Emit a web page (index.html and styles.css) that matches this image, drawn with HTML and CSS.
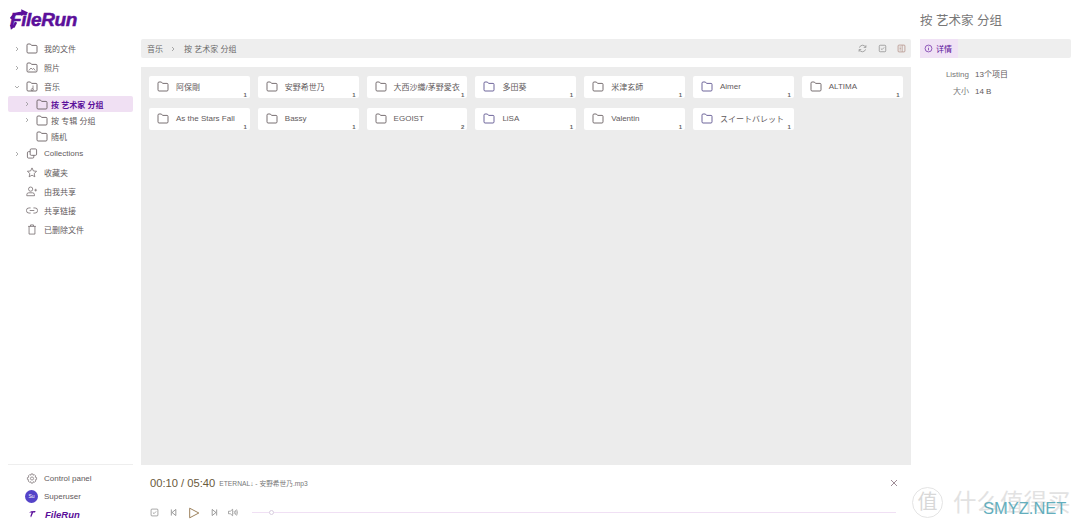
FILE: index.html
```html
<!DOCTYPE html>
<html lang="zh-CN">
<head>
    <meta charset="UTF-8">
    <meta name="viewport" content="width=device-width, initial-scale=1.0">
    <title>FileRun</title>
    <link rel="stylesheet" href="styles.css">
</head>

<body>
    <svg class="defs" width="0" height="0">
        <symbol id="folder" viewBox="0 0 12 11"><path d="M1 2.2Q1 1 2 1H4.4L5.6 2.4H10Q11 2.4 11 3.4V8.8Q11 10 10 10H2Q1 10 1 8.8Z" fill="none" stroke="currentColor" stroke-width=".9"/></symbol>
        <symbol id="chev" viewBox="0 0 6 6"><path d="M2 1L4 3L2 5" fill="none" stroke="currentColor" stroke-width=".7"/></symbol>
        <symbol id="chev-down" viewBox="0 0 6 6"><path d="M1 2L3 4L5 2" fill="none" stroke="currentColor" stroke-width=".7"/></symbol>
    </svg>

    <div id="app">
        <!--left tree-->
        <aside class="sidebar">
            <div class="logo"><span class="logo-text">FileRun</span>
                <svg class="logo-arrow" viewBox="0 0 22 24">
                    <path d="M1 11Q5 4 15 4" fill="none" stroke="#5b0f9a" stroke-width="2.8"/>
                    <path d="M13 0L21 4L13 8Z" fill="#5b0f9a"/>
                    <path d="M7 15L4 21" fill="none" stroke="#5b0f9a" stroke-width="2.8"/>
                    <path d="M0 18L6 20L1 24Z" fill="#5b0f9a"/>
                </svg>
            </div>
            <nav class="tree">
                <div class="row"><svg class="chev"><use href="#chev"/></svg><svg class="ico"><use href="#folder"/></svg><span>我的文件</span></div>
                <div class="row"><svg class="chev"><use href="#chev"/></svg>
                    <svg class="ico" viewBox="0 0 12 11"><path d="M1 2.2Q1 1 2 1H4.4L5.6 2.4H10Q11 2.4 11 3.4V8.8Q11 10 10 10H2Q1 10 1 8.8Z" fill="none" stroke="currentColor" stroke-width=".9"/><path d="M2.8 8.5L5 6L6.4 7.4L7.6 6.4L9.2 8.5" fill="none" stroke="currentColor" stroke-width=".7"/></svg>
                    <span>照片</span></div>
                <div class="row"><svg class="chev"><use href="#chev-down"/></svg>
                    <svg class="ico" viewBox="0 0 12 11"><path d="M1 2.2Q1 1 2 1H4.4L5.6 2.4H10Q11 2.4 11 3.4V8.8Q11 10 10 10H2Q1 10 1 8.8Z" fill="none" stroke="currentColor" stroke-width=".9"/><path d="M7 4.5V8M7 8A1 1 0 1 1 6.9 7.9" fill="none" stroke="currentColor" stroke-width=".7"/></svg>
                    <span>音乐</span></div>
                <div class="row sub active"><svg class="chev"><use href="#chev"/></svg><svg class="ico"><use href="#folder"/></svg><span>按 艺术家 分组</span></div>
                <div class="row sub"><svg class="chev"><use href="#chev"/></svg><svg class="ico"><use href="#folder"/></svg><span>按 专辑 分组</span></div>
                <div class="row sub"><i class="chev"></i><svg class="ico"><use href="#folder"/></svg><span>随机</span></div>
                <div class="row"><svg class="chev"><use href="#chev"/></svg>
                    <svg class="ico" viewBox="0 0 12 12"><rect x="4" y="1" width="7" height="7" rx="1.2" fill="none" stroke="currentColor" stroke-width=".9"/><path d="M4 4H2.2Q1 4 1 5.2V9.8Q1 11 2.2 11H6.8Q8 11 8 9.8V8" fill="none" stroke="currentColor" stroke-width=".9"/></svg>
                    <span>Collections</span></div>
                <div class="row"><i class="chev"></i>
                    <svg class="ico" viewBox="0 0 12 12"><path d="M6 1L7.5 4.3L11 4.7L8.4 7.1L9.1 10.7L6 8.9L2.9 10.7L3.6 7.1L1 4.7L4.5 4.3Z" fill="none" stroke="currentColor" stroke-width=".8"/></svg>
                    <span>收藏夹</span></div>
                <div class="row"><i class="chev"></i>
                    <svg class="ico" viewBox="0 0 13 12"><circle cx="5" cy="3.4" r="2.3" fill="none" stroke="currentColor" stroke-width=".8"/><path d="M.8 10.6V9.6Q.8 7.4 3 7.4H7Q9.2 7.4 9.2 9.6V10.6Z" fill="none" stroke="currentColor" stroke-width=".8"/><path d="M10.5 3V6M9 4.5H12" fill="none" stroke="currentColor" stroke-width=".7"/></svg>
                    <span>由我共享</span></div>
                <div class="row"><i class="chev"></i>
                    <svg class="ico" viewBox="0 0 13 12"><path d="M5 3.2H3.2A2.8 2.8 0 0 0 3.2 8.8H5M8 3.2H9.8A2.8 2.8 0 0 1 9.8 8.8H8M4 6H9" fill="none" stroke="currentColor" stroke-width=".8"/></svg>
                    <span>共享链接</span></div>
                <div class="row"><i class="chev"></i>
                    <svg class="ico" viewBox="0 0 12 12"><path d="M1.8 2.6H10.2M4.4 2.4V1H7.6V2.4M2.8 2.6V11H9.2V2.6" fill="none" stroke="currentColor" stroke-width=".8"/></svg>
                    <span>已删除文件</span></div>
            </nav>
            <div class="side-foot">
                <div class="row"><i class="chev"></i>
                    <svg class="ico" viewBox="0 0 12 12"><circle cx="6" cy="6" r="1.7" fill="none" stroke="currentColor" stroke-width=".7"/><path d="M5 1H7L7.3 2.4L8.6 1.8L10 3.2L9.4 4.5L11 5V7L9.6 7.4L10.2 8.7L8.8 10.1L7.5 9.5L7 11H5L4.5 9.5L3.2 10.1L1.8 8.7L2.4 7.4L1 7V5L2.6 4.5L2 3.2L3.4 1.8L4.7 2.4Z" fill="none" stroke="currentColor" stroke-width=".7"/></svg>
                    <span>Control panel</span></div>
                <div class="row user"><b class="avatar">Su</b><span>Superuser</span></div>
                <div class="row brand">
                    <svg class="mini-mark" viewBox="0 0 8 8"><path d="M1 2.4Q3 .8 7.6 1L7 2.4H5.2L3 7.6L2.4 6L3.6 2.6Q2.4 2.4 1 2.4Z" fill="#5b0f9a"/></svg>
                    <span class="mini-logo">FileRun</span>
                </div>
            </div>
        </aside>

        <!--middle-->
        <main class="main">
            <div class="crumbs">
                <span>音乐</span>
                <svg class="chev"><use href="#chev"/></svg>
                <span>按 艺术家 分组</span>
                <div class="tools">
                    <svg viewBox="0 0 10 10"><path d="M8.5 3.5A3.7 3.7 0 0 0 1.6 4M1.5 6.5A3.7 3.7 0 0 0 8.4 6M8.8 1.4V3.8H6.4M1.2 8.6V6.2H3.6" fill="none" stroke="currentColor" stroke-width=".8"/></svg>
                    <svg viewBox="0 0 10 10"><rect x="1.4" y="1.4" width="7.2" height="7.2" rx="1" fill="none" stroke="currentColor" stroke-width=".8"/><path d="M3.2 5L4.5 6.3L6.8 3.8" fill="none" stroke="currentColor" stroke-width=".8"/></svg>
                    <svg viewBox="0 0 10 10"><rect x="1.2" y="1.2" width="7.6" height="7.6" rx="1" fill="none" stroke="#b08a80" stroke-width=".8"/><path d="M5.8 1.4V8.6M2.8 3.4H4.6M2.8 5H4.6M2.8 6.6H4.6" fill="none" stroke="#b08a80" stroke-width=".7"/></svg>
                </div>
            </div>
            <div class="files">
                <div class="card"><svg class="ico"><use href="#folder"/></svg><span>阿保剛</span><em>1</em></div>
                <div class="card"><svg class="ico"><use href="#folder"/></svg><span>安野希世乃</span><em>1</em></div>
                <div class="card"><svg class="ico"><use href="#folder"/></svg><span>大西沙織/茅野愛衣</span><em>1</em></div>
                <div class="card"><svg class="ico tint"><use href="#folder"/></svg><span>多田葵</span><em>1</em></div>
                <div class="card"><svg class="ico"><use href="#folder"/></svg><span>米津玄師</span><em>1</em></div>
                <div class="card"><svg class="ico tint"><use href="#folder"/></svg><span>Aimer</span><em>1</em></div>
                <div class="card"><svg class="ico"><use href="#folder"/></svg><span>ALTIMA</span><em>1</em></div>
                <div class="card"><svg class="ico"><use href="#folder"/></svg><span>As the Stars Fall</span><em>1</em></div>
                <div class="card"><svg class="ico"><use href="#folder"/></svg><span>Bassy</span><em>1</em></div>
                <div class="card"><svg class="ico"><use href="#folder"/></svg><span>EGOIST</span><em>2</em></div>
                <div class="card"><svg class="ico tint"><use href="#folder"/></svg><span>LiSA</span><em>1</em></div>
                <div class="card"><svg class="ico"><use href="#folder"/></svg><span>Valentin</span><em>1</em></div>
                <div class="card"><svg class="ico tint"><use href="#folder"/></svg><span>スイートバレット</span><em>1</em></div>
            </div>
            <div class="player">
                <div class="now">
                    <span class="time">00:10 / 05:40</span>
                    <span class="track">ETERNAL↓ - 安野希世乃.mp3</span>
                    <svg class="close" viewBox="0 0 8 8"><path d="M1 1L7 7M7 1L1 7" fill="none" stroke="#86707c" stroke-width=".8"/></svg>
                </div>
                <div class="controls">
                    <svg class="ctl" viewBox="0 0 10 10"><rect x="1.2" y="1.2" width="7.6" height="7.6" rx="1" fill="none" stroke="currentColor" stroke-width=".7"/><path d="M3.2 5L4.5 6.3L6.8 3.8" fill="none" stroke="currentColor" stroke-width=".7"/></svg>
                    <svg class="ctl" viewBox="0 0 10 10"><path d="M2.6 1.6V8.4M7.6 1.6V8.4L3.4 5Z" fill="none" stroke="currentColor" stroke-width=".8"/></svg>
                    <svg class="ctl play" viewBox="0 0 10 10"><path d="M1.4 1V9L9 5Z" fill="none" stroke="#8a6a3e" stroke-width=".7"/></svg>
                    <svg class="ctl" viewBox="0 0 10 10"><path d="M7.4 1.6V8.4M2.4 1.6V8.4L6.6 5Z" fill="none" stroke="currentColor" stroke-width=".8"/></svg>
                    <svg class="ctl wide" viewBox="0 0 12 10"><path d="M1 3.6H3L5.6 1.4V8.6L3 6.4H1ZM7.2 3.4Q8 5 7.2 6.6M8.6 2.4Q10 5 8.6 7.6M10 1.6Q11.8 5 10 8.4" fill="none" stroke="currentColor" stroke-width=".7"/></svg>
                    <div class="seek"><i></i></div>
                </div>
            </div>
        </main>

        <!--right details-->
        <aside class="details">
            <h1>按 艺术家 分组</h1>
            <div class="tabs">
                <div class="tab">
                    <svg viewBox="0 0 10 10"><circle cx="5" cy="5" r="3.8" fill="none" stroke="currentColor" stroke-width=".7"/><path d="M5 4.4V7M5 3V3.6" fill="none" stroke="currentColor" stroke-width=".7"/></svg>
                    <span>详情</span>
                </div>
            </div>
            <dl class="props">
                <dt>Listing</dt><dd>13个项目</dd>
                <dt>大小</dt><dd>14 B</dd>
            </dl>
        </aside>
    </div>

    <div class="watermark">
        <span class="seal">值</span>
        <span class="wm-cn">什么值得买</span>
        <span class="wm-en">SMYZ.NET</span>
    </div>
</body>
</html>
```

FILE: styles.css
```css
* {
    box-sizing: border-box;
}
html, body {
    height: 100%;
}
body {
    margin: 0;
    font-family: "Liberation Sans", "Noto Sans CJK SC", sans-serif;
    font-size: 8px;
    color: #5f5a5c;
    background-color: #fff;
    overflow: hidden;
}
.defs {
    position: absolute;
}
#app {
    display: flex;
    height: 527px;
}

/* sidebar */
.sidebar {
    width: 141px;
    flex: none;
    display: flex;
    flex-direction: column;
    padding: 0 8px;
}
.logo {
    position: relative;
    height: 39px;
    padding: 9px 0 0 2px;
}
.logo-text {
    font-size: 19px;
    line-height: 22px;
    font-weight: bold;
    font-style: italic;
    letter-spacing: -.4px;
    color: #5b0f9a;
    -webkit-text-stroke: .5px #5b0f9a;
}
.logo-arrow {
    position: absolute;
    left: 2px;
    top: 8px;
    width: 19px;
    height: 23px;
}
.tree {
    flex: 1;
}
.row {
    display: flex;
    align-items: center;
    height: 19px;
    width: 125px;
}
.row .chev {
    width: 6px;
    height: 6px;
    margin: 0 6px 0 6px;
    flex: none;
    color: #8a8a8a;
}
.row .ico {
    width: 12px;
    height: 11px;
    margin-right: 6px;
    flex: none;
    color: #6a6063;
}
.row.sub {
    height: 16px;
    padding-left: 10px;
}
.row.sub .chev {
    margin-right: 6px;
}
.row.sub .ico {
    margin-right: 3px;
}
.row.active {
    background-color: #f0e0f3;
    border-radius: 2px;
    color: #5b0f9a;
    font-weight: bold;
}
.side-foot {
    border-top: 1px solid #eee;
    height: 63px;
    padding-top: 4px;
}
.side-foot .row {
    height: 18px;
}
.user {
    padding-left: 17px;
}
.avatar {
    width: 13px;
    height: 13px;
    margin-right: 6px;
    border-radius: 50%;
    background-color: #5443c8;
    color: #fff;
    font-size: 5px;
    font-weight: normal;
    text-align: center;
    line-height: 13px;
}
.brand {
    padding-left: 20px;
}
.mini-mark {
    width: 8px;
    height: 8px;
    margin-right: 9px;
}
.mini-logo {
    font-size: 9.5px;
    font-weight: bold;
    font-style: italic;
    color: #5b0f9a;
}

/* main column */
.main {
    width: 770px;
    flex: none;
    display: flex;
    flex-direction: column;
    padding-top: 39px;
}
.crumbs {
    display: flex;
    align-items: center;
    height: 19px;
    padding: 0 5px 0 6px;
    background-color: #eee;
    border-radius: 2px;
    color: #6a6a6a;
}
.crumbs .chev {
    width: 6px;
    height: 6px;
    margin: 0 8px 0 7px;
    color: #888;
}
.tools {
    margin-left: auto;
    display: flex;
    gap: 10.5px;
    color: #8a8a8a;
}
.tools svg {
    width: 9px;
    height: 9px;
}
.files {
    flex: 1;
    margin-top: 9px;
    padding: 9px 8px;
    background-color: #ececec;
    display: grid;
    grid-template-columns: repeat(7, 100.8px);
    grid-auto-rows: 22px;
    column-gap: 8px;
    row-gap: 10px;
    align-content: start;
}
.card {
    position: relative;
    display: flex;
    align-items: center;
    padding: 0 0 1px 8px;
    background-color: #fff;
    border-radius: 2px;
    white-space: nowrap;
}
.card .ico {
    width: 12px;
    height: 11px;
    margin-right: 7px;
    flex: none;
    color: #6a6063;
}
.card .ico.tint {
    color: #5f5590;
}
.card em {
    position: absolute;
    right: 3px;
    bottom: 0;
    font-style: normal;
    font-weight: bold;
    font-size: 6px;
    color: #666;
}

/* player */
.player {
    height: 62px;
    flex: none;
    padding: 0 9px;
}
.now {
    display: flex;
    align-items: center;
    height: 34px;
    padding-top: 1px;
}
.time {
    font-size: 11.2px;
    color: #6a5a3c;
    margin-right: 4px;
}
.track {
    font-size: 6.7px;
    color: #777;
}
.close {
    width: 8px;
    height: 8px;
    margin-left: auto;
    margin-right: 4px;
}
.controls {
    display: flex;
    align-items: center;
    height: 22px;
    padding-top: 5px;
    color: #777;
}
.ctl {
    width: 9px;
    height: 9px;
    margin-right: 10px;
}
.ctl.play {
    width: 12px;
    height: 12px;
}
.ctl.wide {
    width: 12px;
    margin-left: -2px;
}
.seek {
    position: relative;
    flex: 1;
    height: 1px;
    margin: 0 6px 0 3px;
    background-color: #f0e0f4;
}
.seek i {
    position: absolute;
    left: 17px;
    top: -2px;
    width: 5px;
    height: 5px;
    border: 1px solid #d9cfe0;
    border-radius: 50%;
    background-color: #fff;
}

/* details */
.details {
    flex: 1;
    padding: 0 9px;
}
.details h1 {
    margin: 0;
    height: 39px;
    padding-top: 10px;
    font-size: 12.5px;
    font-weight: normal;
    color: #777;
}
.tabs {
    height: 19px;
    background-color: #eee;
    border-radius: 2px;
}
.tab {
    display: flex;
    align-items: center;
    gap: 3px;
    width: 38px;
    height: 19px;
    padding-left: 4px;
    background-color: #f0e2f5;
    color: #5b0f9a;
}
.tab svg {
    width: 9px;
    height: 9px;
}
.props {
    display: grid;
    grid-template-columns: 49px auto;
    column-gap: 6px;
    row-gap: 6px;
    margin: 11px 0 0;
    line-height: 11px;
}
.props dt {
    text-align: right;
    color: #777;
}
.props dd {
    margin: 0;
}

/* screenshot watermark, lies over the page corner */
.watermark {
    position: absolute;
    left: 912px;
    top: 487px;
    width: 168px;
    height: 40px;
}
.seal {
    position: absolute;
    left: 0;
    top: 0;
    width: 31px;
    height: 31px;
    border: 1px solid #e4e4e4;
    border-radius: 50%;
    font-size: 20px;
    line-height: 29px;
    text-align: center;
    color: #d8d8d8;
}
.wm-cn {
    position: absolute;
    left: 41px;
    top: 2px;
    font-size: 23.5px;
    line-height: 28px;
    color: #e2e2e2;
    white-space: nowrap;
}
.wm-en {
    position: absolute;
    left: 71px;
    top: 11px;
    font-size: 16.5px;
    line-height: 20px;
    color: #63aebd;
    white-space: nowrap;
}
```
